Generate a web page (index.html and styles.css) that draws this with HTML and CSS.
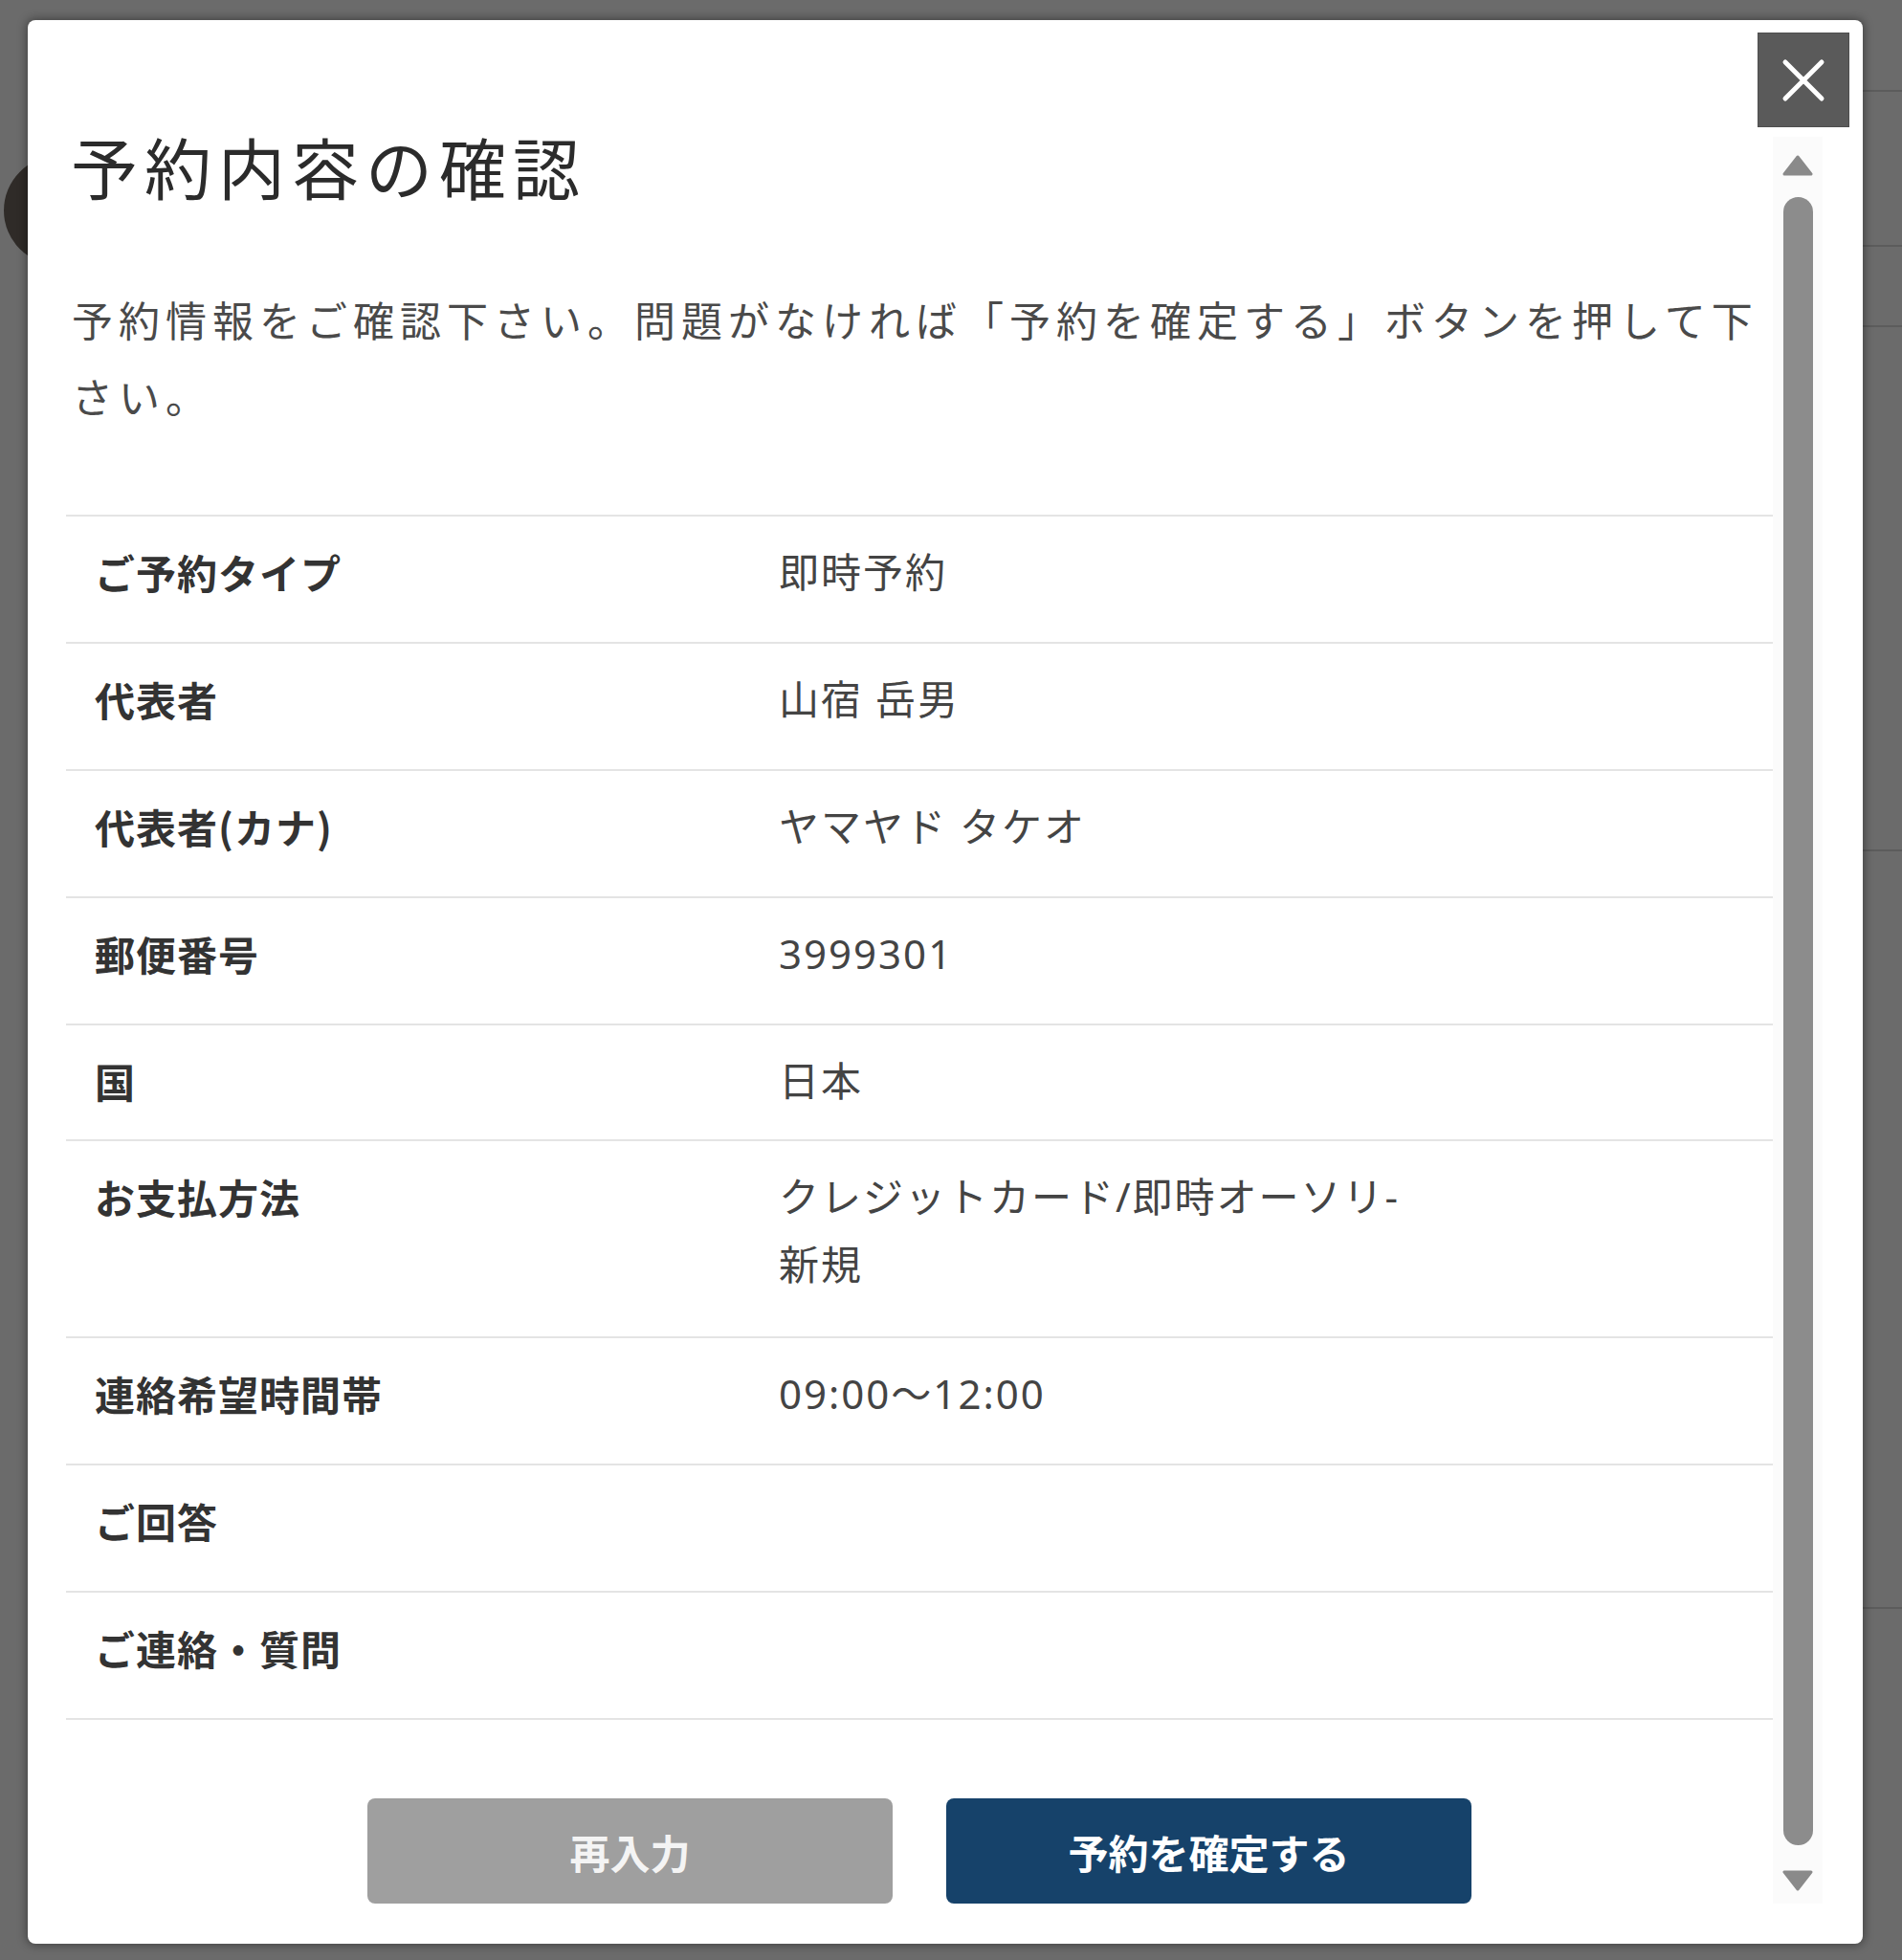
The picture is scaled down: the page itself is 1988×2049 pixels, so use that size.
FILE: index.html
```html
<!DOCTYPE html>
<html lang="ja">
<head>
<meta charset="utf-8">
<title>予約内容の確認</title>
<link rel="stylesheet" href="styles.css">
</head>
<body>
<div class="backdrop">
  <div class="bg-circle"></div>
  <div class="bg-line bg-line-1"></div>
  <div class="bg-line bg-line-2"></div>
  <div class="bg-line bg-line-3"></div>
  <div class="bg-line bg-line-4"></div>
  <div class="bg-line bg-line-5"></div>
</div>

<div class="modal" role="dialog" aria-labelledby="modal-title">
  <button class="close-btn" aria-label="閉じる">
    <svg width="46" height="46" viewBox="0 0 46 46" aria-hidden="true">
      <path d="M4 4 L42 42 M42 4 L4 42" stroke="#fff" stroke-width="5" stroke-linecap="round" fill="none"/>
    </svg>
  </button>

  <div class="modal-content">
    <h1 class="title" id="modal-title">予約内容の確認</h1>
    <p class="lead">予約情報をご確認下さい。問題がなければ「予約を確定する」ボタンを押して下さい。</p>

    <div class="table">
      <div class="row"><div class="label">ご予約タイプ</div><div class="value">即時予約</div></div>
      <div class="row"><div class="label">代表者</div><div class="value">山宿 岳男</div></div>
      <div class="row"><div class="label">代表者(カナ)</div><div class="value">ヤマヤド タケオ</div></div>
      <div class="row"><div class="label">郵便番号</div><div class="value">3999301</div></div>
      <div class="row row-compact"><div class="label">国</div><div class="value">日本</div></div>
      <div class="row row-tall"><div class="label">お支払方法</div><div class="value">クレジットカード/即時オーソリ-新規</div></div>
      <div class="row"><div class="label">連絡希望時間帯</div><div class="value">09:00～12:00</div></div>
      <div class="row"><div class="label">ご回答</div><div class="value"></div></div>
      <div class="row"><div class="label">ご連絡・質問</div><div class="value"></div></div>
    </div>

    <div class="actions">
      <button class="btn btn-back">再入力</button>
      <button class="btn btn-confirm">予約を確定する</button>
    </div>
  </div>

  <div class="scrollbar" aria-hidden="true">
    <svg class="arrow" width="32" height="23" viewBox="0 0 32 23">
      <path d="M16 2 L30 20 L2 20 Z" fill="#8a8a8a" stroke="#8a8a8a" stroke-width="3" stroke-linejoin="round"/>
    </svg>
    <div class="thumb"></div>
    <svg class="arrow" width="32" height="23" viewBox="0 0 32 23">
      <path d="M2 3 L30 3 L16 21 Z" fill="#8a8a8a" stroke="#8a8a8a" stroke-width="3" stroke-linejoin="round"/>
    </svg>
  </div>
</div>
</body>
</html>
```

FILE: styles.css
```css
* {
  box-sizing: border-box;
}

html, body {
  margin: 0;
  padding: 0;
}

body {
  width: 1988px;
  height: 2049px;
  overflow: hidden;
  background: #6b6b6b;
  font-family: "Noto Sans CJK JP", "Noto Sans", sans-serif;
  color: #333;
  position: relative;
}

/* underlying page, seen through the dark overlay */
.backdrop {
  position: absolute;
  inset: 0;
}

.bg-circle {
  position: absolute;
  left: 4px;
  top: 163px;
  width: 114px;
  height: 114px;
  border-radius: 50%;
  background: #2f2b28;
}

.bg-line {
  position: absolute;
  left: 1940px;
  right: 0;
  height: 2px;
  background: #5c5c5c;
}
.bg-line-1 { top: 94px; }
.bg-line-2 { top: 256px; }
.bg-line-3 { top: 340px; }
.bg-line-4 { top: 888px; }
.bg-line-5 { top: 1680px; }

/* dialog */
.modal {
  position: absolute;
  left: 29px;
  top: 21px;
  width: 1918px;
  height: 2011px;
  background: #fff;
  border-radius: 8px;
  box-shadow: 0 0 10px 2px rgba(0, 0, 0, 0.35);
  display: flex;
  padding: 108px 42px 42px 40px;
}

.close-btn {
  position: absolute;
  top: 13px;
  right: 14px;
  width: 96px;
  height: 99px;
  background: #5a5a5a;
  border: 1px solid #4e4e4e;
  padding: 0;
  display: flex;
  align-items: center;
  justify-content: center;
  cursor: pointer;
}

.modal-content {
  flex: 1;
  min-width: 0;
  display: flex;
  flex-direction: column;
}

.title {
  margin: 0;
  padding-left: 5px;
  font-size: 70px;
  line-height: 90px;
  font-weight: 400;
  letter-spacing: 7px;
  color: #2b2b2b;
}

.lead {
  margin: 74px 0 0;
  padding-left: 6px;
  font-size: 43px;
  line-height: 80px;
  letter-spacing: 6px;
  color: #4a4a4a;
}

.table {
  margin-top: 85px;
  border-top: 2px solid #e4e4e4;
}

.row {
  display: grid;
  grid-template-columns: 715px 1fr;
  border-bottom: 2px solid #e4e4e4;
  padding: 22px 0 38px;
  font-size: 42px;
  line-height: 71px;
}

.row-compact {
  padding-bottom: 26px;
}

.row-tall {
  padding-bottom: 40px;
}

.label {
  padding-left: 30px;
  font-weight: 700;
  letter-spacing: 1px;
  color: #333;
}

.value {
  padding-left: 30px;
  max-width: 690px;
  font-family: "Noto Sans", "Noto Sans CJK JP", sans-serif;
  letter-spacing: 2px;
  color: #444;
}

.actions {
  margin-top: 82px;
  display: flex;
  justify-content: center;
  gap: 56px;
}

.btn {
  width: 549px;
  height: 110px;
  border: none;
  border-radius: 8px;
  font-family: "Noto Sans CJK JP", sans-serif;
  font-size: 42px;
  font-weight: 700;
  color: #fff;
  padding: 0;
  cursor: pointer;
}

.btn-back {
  background: #9f9f9f;
  color: #f4f4f4;
}

.btn-confirm {
  background: #16426a;
}

/* custom scrollbar */
.scrollbar {
  width: 52px;
  margin-top: 14px;
  background: #fbfbfb;
  display: flex;
  flex-direction: column;
  align-items: center;
  padding: 19px 0 13px;
}

.arrow {
  display: block;
  flex: none;
}

.thumb {
  flex: 1;
  width: 31px;
  margin: 21px 0 25px;
  border-radius: 16px;
  background: #8c8c8c;
}
```
